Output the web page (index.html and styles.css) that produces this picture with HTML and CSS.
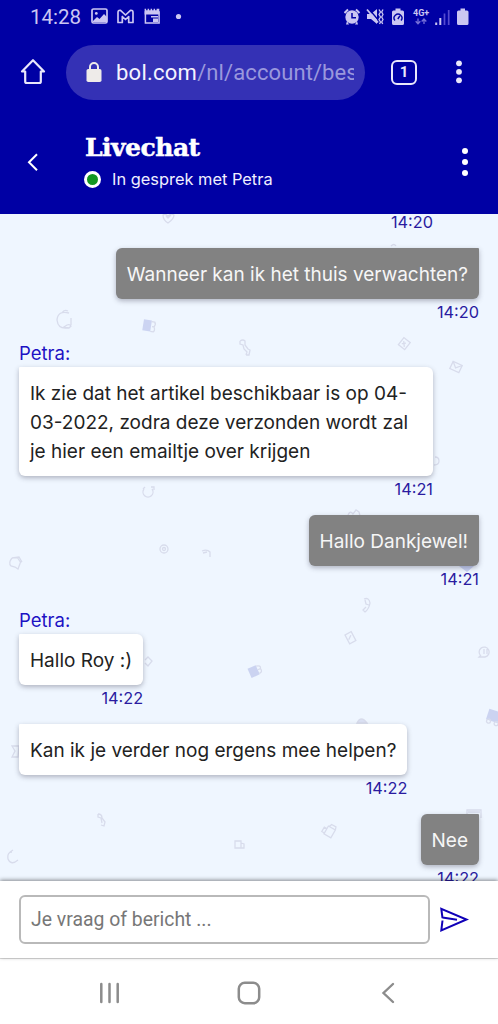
FILE: index.html
```html
<!DOCTYPE html>
<html lang="nl">
<head>
<meta charset="utf-8">
<meta name="viewport" content="width=device-width, initial-scale=1">
<title>Livechat</title>
<link rel="stylesheet" href="styles.css">
</head>
<body>
<div class="phone">
  <div class="status">
    <span class="clock">14:28</span>
    <svg class="notif" width="94" height="20" viewBox="0 0 94 20">
      <rect x="1" y="2" width="15" height="14" rx="1.500" fill="none" stroke="currentColor" stroke-width="1.700"/>
      <circle cx="5.300" cy="6.400" r="1.400" fill="currentColor"/>
      <path d="M2 14l4-4 2.500 2 4.500-5 3 3v5H2z" fill="currentColor"/>
      <path d="M27 15.500V5.500q0-2.500 2.500-2.200L34.500 8l5-4.700q2.500-.3 2.500 2.200v10h-4.300V9.500l-3.200 3-3.200-3v6z" fill="none" stroke="currentColor" stroke-width="1.700" stroke-linejoin="round"/>
      <path d="M54.400 5h13.700v11H54.400z" fill="none" stroke="currentColor" stroke-width="1.500"/>
      <path d="M53.600 1.800h1.500v1.500h1.500V1.800h1.500v1.500h1.500V1.800h1.500v1.500h1.500V1.800h1.500v1.500h1.500V1.800h2.700V7.500H53.600zM60 9h7v1.500h-7zM62 11.500h5V15h-5z" fill="currentColor"/>
      <circle cx="87.500" cy="9.500" r="2.600" fill="currentColor"/>
    </svg>
    <svg class="system" width="130" height="20" viewBox="0 0 130 20">
      <g fill="currentColor">
        <circle cx="8" cy="10" r="6.700"/>
        <path d="M3 14l-1 3.500h3zM13 14l1 3.500h-3z"/>
        <path d="M.5 6L4 2.500M15.500 6L12 2.500" stroke="currentColor" stroke-width="2"/>
        <path d="M23 7h4l6-5v15l-6-5h-4z"/>
        <path d="M48 5q0-1.500 1.500-1.500h2V1.500h5v2h2Q60 3.500 60 5v11.500q0 1.500-1.500 1.500h-9q-1.500 0-1.500-1.500z"/>
        <path d="M113 5q0-1.500 1.500-1.500h2V1.500h4.500v2h2q1.500 0 1.500 1.500v11.500q0 1.500-1.500 1.500h-8.500q-1.500 0-1.500-1.500z"/>
      </g>
      <path d="M8 6v4.700h4" fill="none" stroke="#0000a4" stroke-width="1.500"/>
      <path d="M24.500 1.500l11 13" stroke="#0000a4" stroke-width="1.400"/>
      <path d="M23 2.500l11 13" stroke="currentColor" stroke-width="1.800"/>
      <path d="M35 2.500l1.500 2.500-1.500 2.500 1.500 2.500-1.500 2.500 1.500 2.500-1 2M39 2.500L37.700 5 39 7.500 37.700 10l1.300 2.500-1.300 2.500 1 2" fill="none" stroke="currentColor" stroke-width="1.300"/>
      <path d="M51 13.500a3.900 3.900 0 1 1 6 0M53.800 12l2-3" fill="none" stroke="#0000a4" stroke-width="1.400"/>
      <text class="network" x="69" y="9">4G+</text>
      <path d="M74 11.500v5M71.700 14.200L74 16.800l2.300-2.600M80 17v-5M77.700 14.500L80 12l2.300 2.500" fill="none" stroke="#7770d8" stroke-width="1.300"/>
      <path d="M92.200 18v-2.500M96.300 18v-7" stroke="currentColor" stroke-width="2"/>
      <path d="M100.500 18V6.500M104.700 18V3" stroke="#554bd0" stroke-width="1.700"/>
    </svg>
  </div>

  <div class="browser">
    <svg class="home" width="26" height="28" viewBox="0 0 26 28" fill="none" stroke="currentColor" stroke-width="2.200" stroke-linejoin="round" stroke-linecap="round"><path d="M2 13.500L13 2.200 24 13.500H20.800V23.500q0 1.500-1.500 1.500H6.700q-1.500 0-1.500-1.500V13.500z"/></svg>
    <div class="address">
      <svg width="16" height="20" viewBox="0 0 16 20"><rect x=".5" y="7" width="15" height="13" rx="1.800" fill="#eeebe9"/><path d="M4 8V5a4 4 0 0 1 8 0v3" fill="none" stroke="#eeebe9" stroke-width="2"/></svg>
      <div class="url"><b>bol.com</b>/nl/account/bes</div>
    </div>
    <div class="tabs">1</div>
    <svg class="kebab" width="8" height="24" viewBox="0 0 8 24" fill="currentColor"><circle cx="4" cy="3.300" r="2.900"/><circle cx="4" cy="11.800" r="2.900"/><circle cx="4" cy="20.300" r="2.900"/></svg>
  </div>

  <header class="head">
    <svg class="back" width="12" height="20" viewBox="0 0 12 20" fill="none" stroke="currentColor" stroke-width="2"><path d="M10 2.200L2 10.200l8 8"/></svg>
    <div class="titles">
      <h1>Livechat</h1>
      <p class="agent"><i class="online"></i><span>In gesprek met Petra</span></p>
    </div>
    <svg class="menu" width="8" height="30" viewBox="0 0 8 30" fill="currentColor"><circle cx="4" cy="4" r="3"/><circle cx="4" cy="15" r="3"/><circle cx="4" cy="26" r="3"/></svg>
  </header>

  <main class="chat">
    <svg class="doodles" width="498" height="666" viewBox="0 215 498 666" fill="none" stroke="#d8dcec" stroke-width="1.300">
      <path d="M163 216q2-2 5 1 3-3 6-1 0 4-6 8-5-3-5-8zM166 217l2 2 3-3"/>
      <path d="M69 314q-11-3-12 7 1 9 10 8M62 314q2-4 6-2M67 326q3-1 4 1l-2 2-5-1zM71 319v7"/>
      <g transform="rotate(9 148 327)"><rect x="143" y="321" width="8" height="11" fill="#ccd4f2" stroke="none"/><path d="M151 322h3q2 2 0 5 2 3 0 5h-3M152 327h3"/></g>
      <path d="M240 342q3-2 5 0v4l3 4 2 1-1 5h-3M240 342v3l3 1 1 4 3 3-1 3"/>
      <g transform="rotate(38 404 345)"><rect x="400" y="340" width="8" height="9"/><path d="M402 346l3-3M402 343l4 4"/></g>
      <g transform="rotate(25 456 368)"><rect x="451" y="364" width="10" height="8"/><path d="M451 364l5 5 5-5"/></g>
      <path d="M144 490a5 5 0 1 0 8 0M143 490l2-2M151 488h3v3"/>
      <path d="M12 559q-4 5-1 8l4 1 3 2 3-8M12 559l7-1 3 5M17 558l4 6"/>
      <circle cx="164" cy="550" r="4"/><circle cx="164" cy="550" r="1.500"/>
      <path d="M202 552q5-2 8 1v5M203 554l4-1"/>
      <path d="M435 458q4 0 4 4t-5 4M396 247q-2-3-5 0M348 516q2-5 5-1l3-4 3 2 1 4"/>
      <path d="M459 567h15l-7 6z" fill="#c7d1f3" stroke="none"/>
      <path d="M364 600q5-2 6 4-1 6-5 9l-2-2 3-3M365 601l1 4 3 1"/>
      <g transform="rotate(-28 350 639)"><rect x="347" y="634" width="7" height="10"/><path d="M348 640l4-3"/></g>
      <path d="M145 661l3-3 4 4-4 5-3-3M12 747h7l-1 11h-6l3-6zM481 657a5 5 0 1 1 4 1h-6l2-2M484 650v5M487 650v5"/>
      <g transform="rotate(-24 255 672)"><rect x="249" y="667" width="9" height="10" fill="#cbd3f1" stroke="none"/><path d="M258 668q5 1 3 4 1 4-3 4M258 672h3"/></g>
      <g transform="rotate(18 492 718)"><rect x="487" y="711" width="14" height="11" fill="#cbd3f1" stroke="none"/><circle cx="490" cy="723" r="2"/><circle cx="498" cy="723" r="2"/></g>
      <path d="M357 724q4-8 10 0z" fill="#dbe1f4"/>
      <path d="M98 815q4 0 4 4l3 4-1 4-3-1M98 815v3l3 1 1 5"/>
      <g transform="rotate(-60 329 832)"><path d="M324 829h9v8h-9zM333 830l3 1v5l-3 1M325 829v-3h5v3"/></g>
      <path d="M467 815v-4h14v8M468 813h12M235 842h6v7h-6zM241 844l3 1v4h-3M12 853q-5 0-4 7 3 7 10 1M10 853l3-2"/>
    </svg>
    <div class="thread">
      <time class="cut">14:20</time>
      <div class="msg mine"><p class="bubble">Wanneer kan ik het thuis verwachten?</p><time>14:20</time></div>
      <div class="sender">Petra:</div>
      <div class="msg wide"><p class="bubble">Ik zie dat het artikel beschikbaar is op 04-<br>03-2022, zodra deze verzonden wordt zal<br>je hier een emailtje over krijgen</p><time>14:21</time></div>
      <div class="msg mine"><p class="bubble">Hallo Dankjewel!</p><time>14:21</time></div>
      <div class="sender">Petra:</div>
      <div class="msg"><p class="bubble">Hallo Roy :)</p><time>14:22</time></div>
      <div class="msg"><p class="bubble">Kan ik je verder nog ergens mee helpen?</p><time>14:22</time></div>
      <div class="msg mine"><p class="bubble">Nee</p><time>14:22</time></div>
    </div>
  </main>

  <div class="composer">
    <div class="field">Je vraag of bericht ...</div>
    <svg width="30" height="26" viewBox="0 0 30 26" fill="none" stroke="#1000b8" stroke-width="2"><path d="M2.500 11L1.300 1.800 26.500 12.500 1.300 23.500l1.200-10M2.500 10.500L17 12.700"/></svg>
  </div>
  <nav class="nav">
    <svg width="22" height="22" viewBox="0 0 22 22"><path d="M3.300 2v18M11.500 2v18M19.700 2v18" stroke="#8c8c8c" stroke-width="2.500" stroke-linecap="round"/></svg>
    <svg class="nav-home" width="24" height="24" viewBox="0 0 24 24"><rect x="1.800" y="1.800" width="20.400" height="20.400" rx="6" fill="none" stroke="#8c8c8c" stroke-width="2.500"/></svg>
    <svg width="14" height="22" viewBox="0 0 14 22"><path d="M12 2L2.500 11l9.500 9" fill="none" stroke="#8c8c8c" stroke-width="2.400" stroke-linecap="round"/></svg>
  </nav>
</div>
</body>
</html>
```

FILE: styles.css
```css
* { box-sizing: border-box; }
body, p, h1 { margin: 0; }
body { background: #fff; font-family: Inter, "Liberation Sans", sans-serif; }
svg { display: block; flex: none; }

.phone {
  width: 498px;
  height: 1024px;
  display: flex;
  flex-direction: column;
  overflow: hidden;
}

.status {
  height: 34px;
  padding-left: 30px;
  padding-right: 24px;
  display: flex;
  align-items: center;
  background: #0000a4;
  color: #cbc6f2;
  font-family: Roboto, sans-serif;
}
.clock { width: 61px; font-size: 20.500px; }
.system { margin-left: auto; }
.network { font: 700 9px Roboto, sans-serif; fill: currentColor; }

.browser {
  height: 76px;
  padding: 0 35px 0 20px;
  display: flex;
  align-items: center;
  background: #0000a4;
  color: #e9e7fb;
}
.address {
  width: 299px;
  height: 55px;
  margin-left: 20px;
  padding: 2px 11px 0 20px;
  border-radius: 28px;
  display: flex;
  align-items: center;
  gap: 14px;
  background: #3431b5;
}
.address svg { margin-top: -2px; }
.url {
  flex: 1;
  overflow: hidden;
  white-space: nowrap;
  font: 400 22px/30px Roboto, sans-serif;
  letter-spacing: 0.1px;
  color: #9a98dd;
}
.url b { font-weight: 400; letter-spacing: 0.25px; color: #f4f3ff; }
.tabs {
  width: 26px;
  height: 25px;
  margin-left: 26px;
  border: 2.500px solid #e9e7fb;
  border-radius: 6px;
  font: 700 15px/21px Roboto, sans-serif;
  text-align: center;
}
.kebab { margin-left: auto; }

.head {
  height: 104px;
  padding: 0 29px 0 27px;
  display: flex;
  background: #0000a4;
  color: #fff;
}
.back { margin-top: 42px; }
.titles { flex: 1; padding: 22px 0 0 46px; }
.titles h1 {
  font: 700 25px/32px "DejaVu Serif", serif;
  letter-spacing: -0.5px;
  -webkit-text-stroke: 0.5px #fff;
}
.agent {
  margin-left: -1px;
  display: flex;
  align-items: center;
  gap: 11px;
  font-size: 16.400px;
  line-height: 31px;
  color: #f0efff;
}
.online {
  width: 17px;
  height: 17px;
  border: 3px solid #fff;
  border-radius: 50%;
  background: #129622;
}
.menu { margin-top: 37px; }

.chat {
  position: relative;
  height: 667px;
  overflow: hidden;
  background: #eff6ff;
}
.doodles { position: absolute; inset: 0; }
.thread {
  position: relative;
  height: 667px;
  padding: 0 19px;
  display: flex;
  flex-direction: column;
}
.thread time {
  align-self: flex-end;
  font-size: 16.300px;
  line-height: 26px;
  color: #2a1ba0;
}
.thread .cut { margin: -5px 46px 13px 0; }
.msg {
  align-self: flex-start;
  display: flex;
  flex-direction: column;
  margin-bottom: 13px;
  flex: none;
}
.mine { align-self: flex-end; }
.wide { width: 414px; }
.bubble {
  padding: 12px 11px 10px;
  border-radius: 1px 6px 6px 6px;
  background: #fff;
  box-shadow: 0 2px 5px rgba(50, 50, 70, 0.34);
  color: #222;
  font-size: 19px;
  line-height: 29px;
  white-space: nowrap;
}
.mine .bubble {
  border-radius: 6px 1px 6px 6px;
  background: #828282;
  color: #f6f6f6;
}
.sender {
  height: 29px;
  flex: none;
  font-size: 18.500px;
  line-height: 31px;
  color: #1c12c4;
}

.composer {
  position: relative;
  height: 77px;
  padding: 0 28px 0 19px;
  display: flex;
  align-items: center;
  justify-content: space-between;
  background: #fff;
  box-shadow: 0 -1px 4px rgba(0, 0, 0, 0.45);
}
.field {
  width: 411px;
  height: 49px;
  padding-left: 10px;
  border: 2px solid #b9b9b9;
  border-radius: 6px;
  font: 400 19.400px/45px Roboto, sans-serif;
  color: #777;
}
.nav {
  height: 66px;
  padding: 2px 103px 0 98px;
  border-top: 1px solid #ddd;
  display: flex;
  align-items: center;
  justify-content: space-between;
}
.nav-home { margin-right: 4px; }
```
